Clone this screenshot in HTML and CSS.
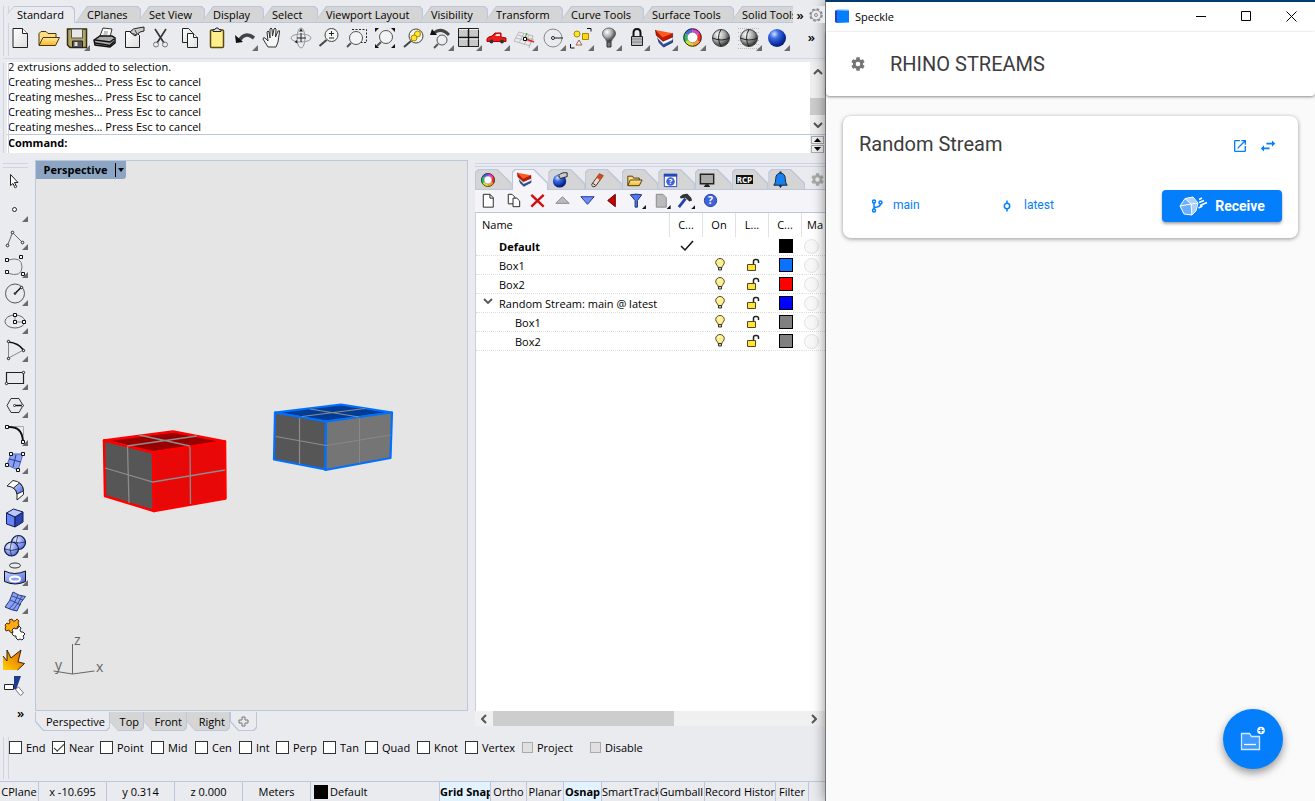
FILE: index.html
```html
<!DOCTYPE html>
<html lang="en">
<head>
<meta charset="utf-8">
<title>Rhino with Speckle</title>
<link rel="stylesheet" href="styles.css">
</head>
<body>
<svg class="defs" aria-hidden="true">
  <defs>
    <linearGradient id="gPaper" x1="0" y1="0" x2="1" y2="1"><stop offset="0" stop-color="#fff"/><stop offset="1" stop-color="#ddd"/></linearGradient>
    <linearGradient id="gFolder" x1="0" y1="0" x2="0" y2="1"><stop offset="0" stop-color="#ffe9a0"/><stop offset="1" stop-color="#f9b81c"/></linearGradient>
    <linearGradient id="gBlue" x1="0" y1="0" x2="1" y2="1"><stop offset="0" stop-color="#c4d2ff"/><stop offset="1" stop-color="#4a67e0"/></linearGradient>
    <radialGradient id="gGray" cx=".35" cy=".3" r=".75"><stop offset="0" stop-color="#fff"/><stop offset=".5" stop-color="#aaa"/><stop offset="1" stop-color="#222"/></radialGradient>
    <radialGradient id="gBall" cx=".35" cy=".28" r=".8"><stop offset="0" stop-color="#d5e4ff"/><stop offset=".3" stop-color="#3d6fe8"/><stop offset=".75" stop-color="#0a2a9c"/><stop offset="1" stop-color="#0a1550"/></radialGradient>
    <radialGradient id="gSoft" cx=".35" cy=".3" r=".8"><stop offset="0" stop-color="#e4ebff"/><stop offset="1" stop-color="#4560dd"/></radialGradient>
    <linearGradient id="gFire" x1="0" y1="1" x2="1" y2="0"><stop offset="0" stop-color="#ffd200"/><stop offset="1" stop-color="#e05a00"/></linearGradient>
  </defs>
  <symbol id="bulb" viewBox="0 0 12 14"><path d="M4 9.500C4 7.500 1.700 7 1.700 4.500a4.300 4 0 0 1 8.600 0C10.300 7 8 7.500 8 9.500z" fill="#ffee8c" stroke="#554a28"/><path d="M4.500 9.500h3v2.500h-3z" fill="#ccc" stroke="#333"/><path d="M4 3.500q1-1.500 2.500-1" stroke="#fff" fill="none"/></symbol>
  <symbol id="unlock" viewBox="0 0 14 14"><path d="M1.500 6.500h8v6h-8z" fill="#ffe343" stroke="#554a10"/><path d="M7.500 6V3.500q0-2 2-2h1q2 0 2 2V5" fill="none" stroke="#222" stroke-width="1.500"/></symbol>
  <symbol id="wheel" viewBox="0 0 20 20"><g fill="none" stroke-width="4"><path d="M10 2.500A7.500 7.500 0 0 1 16.500 6.200" stroke="#e63ac8"/><path d="M16.500 6.200A7.500 7.500 0 0 1 16.500 13.800" stroke="#ff2a2a"/><path d="M16.500 13.800A7.500 7.500 0 0 1 10 17.500" stroke="#ff9a1a"/><path d="M10 17.500A7.500 7.500 0 0 1 3.500 13.800" stroke="#d8e020"/><path d="M3.500 13.800A7.500 7.500 0 0 1 3.500 6.200" stroke="#25c06a"/><path d="M3.500 6.200A7.500 7.500 0 0 1 10 2.500" stroke="#4a62ee"/></g><circle cx="10" cy="10" r="9.200" fill="none" stroke="#222"/><circle cx="10" cy="10" r="5.500" fill="#fff" stroke="#555" stroke-width=".6"/></symbol>
  <symbol id="layers" viewBox="0 0 20 20"><path d="M3 10l5.500 5.500L18.500 11v3L9 19l-4.500-4.500z" fill="#2450b4" stroke="#0c1c50" stroke-width=".8"/><path d="M2 6l6 6.500L18.500 8v3.500L9 16l-6-6z" fill="#fff" stroke="#777" stroke-width=".5"/><path d="M.5 1l.8 5.500L8.500 13l10-4.500V4.500L8 8.500z" fill="#c81800" stroke="#400" stroke-width=".6"/><path d="M.5 1l18 3.500L8 9z" fill="#ff5a1c"/></symbol>
  <symbol id="gear" viewBox="0 0 24 24"><path fill-rule="evenodd" d="M12 15.500A3.500 3.500 0 1 1 12 8.500a3.500 3.500 0 0 1 0 7M19.430 12.970c.04-.32.07-.64.07-.97s-.03-.66-.07-1l2.110-1.630c.19-.15.24-.42.12-.64l-2-3.460c-.12-.22-.39-.31-.61-.22l-2.490 1c-.52-.39-1.060-.73-1.690-.98l-.37-2.650A.5.5 0 0 0 14 2h-4c-.25 0-.46.18-.5.42l-.37 2.650c-.63.25-1.170.59-1.690.98l-2.490-1c-.22-.09-.49 0-.61.22l-2 3.460c-.13.22-.07.49.12.64L4.570 11c-.04.34-.07.67-.07 1s.03.65.07.970l-2.110 1.660c-.19.15-.25.42-.12.64l2 3.460c.12.22.39.3.61.22l2.490-1.010c.52.4 1.060.74 1.690.99l.37 2.650c.04.24.25.42.5.42h4c.25 0 .46-.18.5-.42l.37-2.650c.63-.26 1.170-.59 1.690-.99l2.490 1.010c.22.08.49 0 .61-.22l2-3.460c.12-.22.07-.49-.12-.64z"/></symbol>
</svg>

<div class="desktop">
<main class="rhino">
  <section class="toolbars">
    <nav class="tabs" aria-label="Toolbar groups">
      <button class="tab active">Standard</button><button class="tab">CPlanes</button><button class="tab">Set View</button><button class="tab">Display</button><button class="tab">Select</button><button class="tab">Viewport Layout</button><button class="tab">Visibility</button><button class="tab">Transform</button><button class="tab">Curve Tools</button><button class="tab">Surface Tools</button><button class="tab">Solid Tools</button>
      <button class="more" aria-label="More tabs">»</button>
      <button class="options" aria-label="Options"><svg width="14" height="14" viewBox="0 0 14 14" fill="none" stroke="#888"><circle cx="7" cy="7" r="6" stroke-width="1.500" stroke-dasharray="2.700 2"/><circle cx="7" cy="7" r="5"/><circle cx="7" cy="7" r="1.500"/></svg></button>
    </nav>
    <div class="toolrow">
      <button class="tool" aria-label="New"><svg viewBox="0 0 28 28"><path d="M7 4.500h9.500l5 5v14H7z" fill="url(#gPaper)" stroke="#222"/><path d="M16.500 4.500v5h5" fill="#fff" stroke="#222"/></svg></button>
      <button class="tool" aria-label="Open"><svg viewBox="0 0 28 28"><path d="M5 21V9.500l2-2h5l2 2h8v4" fill="#ffdf80" stroke="#4a3510"/><path d="M5 21.500l4-8h16.500l-4 8z" fill="url(#gFolder)" stroke="#4a3510"/></svg></button>
      <button class="tool menu" aria-label="Save"><svg viewBox="0 0 28 28"><path d="M5.500 5h19v18.500H8L5.500 21z" fill="#b5a564" stroke="#332c12" stroke-width="1.500"/><path d="M9.500 5h11v9h-11z" fill="#e8e8e8" stroke="#555"/><path d="M10.500 17h10v6.500h-10z" fill="#555" stroke="#222"/><path d="M12.500 18h3v4h-3z" fill="#ddd"/></svg></button>
      <button class="tool" aria-label="Print"><svg viewBox="0 0 28 28"><path d="M10 12l3-8 9 1-2 8z" fill="#fff" stroke="#333"/><path d="M4 16l6-4h12l3 2v5l-5 4-15-2z" fill="#aaa" stroke="#111" stroke-width="1.500"/><path d="M5 16l15 2 4-3M5 19l15 2.500 4-4" stroke="#111" fill="none" stroke-width="1.500"/><path d="M14 8h4M13.500 10h4" stroke="#888"/></svg></button>
      <button class="tool" aria-label="Properties"><svg viewBox="0 0 28 28"><path d="M7.500 7.500h10l4 4v12h-14z" fill="url(#gPaper)" stroke="#222"/><path d="M12 8q3-4 8-4l6-1v4l-4 1-5 4z" fill="#ccc" stroke="#222"/><path d="M13 9l6 2M17 6l2 4" stroke="#444"/></svg></button>
      <button class="tool" aria-label="Cut"><svg viewBox="0 0 28 28" fill="none" stroke="#333"><path d="M9 5l9 14M20 5l-9 14" stroke-width="1.600"/><circle cx="10" cy="20.500" r="2.500" stroke="#777"/><circle cx="19" cy="20.500" r="2.500" stroke="#777"/></svg></button>
      <button class="tool" aria-label="Copy"><svg viewBox="0 0 28 28" fill="url(#gPaper)" stroke="#222"><path d="M8.500 4.500h6l4 4v10h-10z"/><path d="M13.500 9.500h6l4 4v10h-10z"/><path d="M19.500 9.500v4h4" fill="#fff"/></svg></button>
      <button class="tool" aria-label="Paste"><svg viewBox="0 0 28 28"><rect x="8.500" y="6" width="13" height="17.500" rx="1" fill="#fdf08c" stroke="#5a4a10" stroke-width="1.500"/><path d="M11 7.500V5.500h2l1-1.500h2l1 1.500h2v2z" fill="#ddd" stroke="#222"/></svg></button>
      <button class="tool menu" aria-label="Undo"><svg viewBox="0 0 28 28"><path d="M9 17Q15 7 24 14" fill="none" stroke="#444" stroke-width="3.500"/><path d="M5 11l1 8 7-1z" fill="#111"/></svg></button>
      <button class="tool" aria-label="Pan"><svg viewBox="0 0 28 28"><path d="M10 23l-5-8q0-2 2-1l3 3-1-9q1-2 2 0l1 6V5q1-2 2 0l.5 7L16 5q1-2 2 0l-.5 8 2.500-6q2-1 1.500 1l-1.500 10-2 5z" fill="#f5f5f5" stroke="#333"/></svg></button>
      <button class="tool" aria-label="Rotate view"><svg viewBox="0 0 28 28" fill="none" stroke="#999"><ellipse cx="15" cy="14" rx="10" ry="4"/><ellipse cx="15" cy="14" rx="4" ry="10"/><path d="M15 9v9M11 14h9" stroke="#222"/><path d="M13 7.500l2-3 2 3zM11 16l-2.500 2 3 1.500z" fill="#222" stroke="none"/></svg></button>
      <button class="tool" aria-label="Zoom dynamic"><svg viewBox="0 0 28 28" fill="none" stroke="#444"><circle cx="17.500" cy="11" r="6.500" fill="#f4f4f4"/><path d="M12.500 16l-7 6" stroke-width="2"/><path d="M15 9.500h5M17.500 7v5M15 14h5" stroke="#222"/></svg></button>
      <button class="tool" aria-label="Zoom window"><svg viewBox="0 0 28 28" fill="none" stroke="#555"><circle cx="14" cy="14" r="6.500" fill="#f4f4f4"/><path d="M9 19l-4 4" stroke-width="2"/><path d="M10 5.500h14.500v13H19" stroke="#222" stroke-dasharray="2 1.500"/></svg></button>
      <button class="tool" aria-label="Zoom extents"><svg viewBox="0 0 28 28" fill="none" stroke="#555"><circle cx="16" cy="13" r="6.500" fill="#f4f4f4"/><path d="M11 18l-4 4" stroke-width="2"/><path d="M5 4h4L5 8zM25 4v4l-4-4zM5 24v-4l4 4zM25 24h-4l4-4z" fill="#111" stroke="none"/></svg></button>
      <button class="tool" aria-label="Zoom selected"><svg viewBox="0 0 28 28" fill="none" stroke="#444"><circle cx="18" cy="12" r="7" fill="#f4f4f4"/><path d="M13 17l-7 6" stroke-width="2"/><circle cx="19.500" cy="10" r="3" fill="#ffe52e" stroke="#a80"/><circle cx="16" cy="14" r="3" fill="#ffe52e" stroke="#a80"/></svg></button>
      <button class="tool menu" aria-label="Undo view"><svg viewBox="0 0 28 28" fill="none"><path d="M8 9q7-6 15 2" stroke="#444" stroke-width="3"/><path d="M4 11l2-6 5 6z" fill="#111"/><circle cx="16" cy="16" r="5" fill="#eee" stroke="#555"/><path d="M12 20l-4 4" stroke="#555" stroke-width="2"/></svg></button>
      <button class="tool menu" aria-label="Four viewports"><svg viewBox="0 0 28 28"><path d="M4.500 4.500h20v18h-20z" fill="#c9c9c9" stroke="#222"/><path d="M14.500 4.500v18M4.500 13.500h20" stroke="#111" stroke-width="1.500"/><path d="M5 5.500h9M15.500 5.500h9M5 15h9M15.500 15h9" stroke="#eee"/></svg></button>
      <button class="tool menu" aria-label="Set view"><svg viewBox="0 0 28 28"><path d="M5 15q0-2 5-3l3-3h6v4l5 1v3.500H5z" fill="#ee1c1c" stroke="#a00"/><path d="M13 12l1.500-2H18v2z" fill="#fdd"/><circle cx="9.500" cy="17.500" r="2" fill="#333"/><circle cx="20" cy="17.500" r="2" fill="#333"/></svg></button>
      <button class="tool menu" aria-label="CPlane"><svg viewBox="0 0 28 28" fill="none" stroke="#bbb"><path d="M9 8l14 4-4 12M4 17l16 5M6 14l16 4M8 11l16 5M9 8L4 17M14 9L9 19M19 11l-5 10M23 12l-4 11"/><path d="M15 14l2-5" stroke="#2a2"/><path d="M16 15l8 3" stroke="#d22" stroke-width="1.500"/><path d="M13.500 13.500h3v3h-3z" fill="#fff" stroke="#111"/></svg></button>
      <button class="tool menu" aria-label="Osnap"><svg viewBox="0 0 28 28" fill="none" stroke="#888"><circle cx="15" cy="14" r="9"/><path d="M16 14h9" stroke="#222"/><circle cx="15" cy="14" r="1.500" fill="#fff" stroke="#222"/></svg></button>
      <button class="tool menu" aria-label="Select"><svg viewBox="0 0 28 28" fill="none"><circle cx="11" cy="10" r="3" fill="#ffe52e" stroke="#a80"/><path d="M16.500 9.500h6v6h-6z" fill="#ffd815" stroke="#a80"/><path d="M13 16l3 5h-6z" stroke="#a64"/><path d="M21 4.500h4v3M4.500 20v4h4" stroke="#111"/></svg></button>
      <button class="tool menu" aria-label="Hide"><svg viewBox="0 0 28 28"><path d="M12.500 17.500c0-3-4-4-4-8a6.500 5.500 0 0 1 13 0c0 4-4 5-4 8z" fill="url(#gGray)" stroke="#666"/><path d="M13 18h4v5h-4z" fill="#777" stroke="#333"/></svg></button>
      <button class="tool menu" aria-label="Lock"><svg viewBox="0 0 28 28"><path d="M11.500 13V9q0-4 3.500-4t3.500 4v4" fill="none" stroke="#111" stroke-width="2"/><path d="M9.500 12.500h11v9h-11z" fill="#bbb" stroke="#222"/><path d="M10 15h10M10 18h10" stroke="#888"/></svg></button>
      <button class="tool menu" aria-label="Layers"><svg viewBox="-5 -5 28 28"><use href="#layers" width="19" height="19"/></svg></button>
      <button class="tool menu" aria-label="Properties"><svg viewBox="-5 -4 28 28"><use href="#wheel" width="19" height="19"/></svg></button>
      <button class="tool" aria-label="Shade"><svg viewBox="0 0 28 28"><circle cx="15" cy="14" r="8.500" fill="url(#gGray)" stroke="#444"/><path d="M15 5.500q-5 8 0 17M6.500 14q9 4 17 0" stroke="#222" fill="none"/></svg></button>
      <button class="tool menu" aria-label="Shade selected"><svg viewBox="0 0 28 28"><path d="M4 4.500h22M4 8.500h22M4 12.500h22M4 16.500h22M4 20.500h22M4 24.500h22" stroke="#bbb" stroke-dasharray="1 1"/><circle cx="15" cy="14" r="8.500" fill="url(#gGray)" stroke="#444"/><path d="M15 5.500q-5 8 0 17M6.500 14q9 4 17 0" stroke="#222" fill="none"/></svg></button>
      <button class="tool menu" aria-label="Render"><svg viewBox="0 0 28 28"><circle cx="15" cy="14" r="9" fill="url(#gBall)"/></svg></button>
      <button class="more" aria-label="More tools">»</button>
    </div>
  </section>

  <section class="command">
    <div class="history">
      <div class="log">
        <p>2 extrusions added to selection.</p><p>Creating meshes... Press Esc to cancel</p><p>Creating meshes... Press Esc to cancel</p><p>Creating meshes... Press Esc to cancel</p><p>Creating meshes... Press Esc to cancel</p>
      </div>
      <div class="vscroll"><svg width="10" height="6" viewBox="0 0 10 6"><path d="M1 5l4-4 4 4"/></svg><span class="thumb"></span><svg width="10" height="6" viewBox="0 0 10 6"><path d="M1 1l4 4 4-4"/></svg></div>
    </div>
    <div class="prompt"><label for="cmd">Command:</label><input id="cmd" type="text"><div class="spin"><button aria-label="Up"><svg width="7" height="4" viewBox="0 0 7 4"><path d="M0 4l3.500-4L7 4z"/></svg></button><button aria-label="Down"><svg width="7" height="4" viewBox="0 0 7 4"><path d="M0 0l3.500 4L7 0z"/></svg></button></div></div>
  </section>

  <section class="work">
    <div class="sidebar">
      <button class="tool" aria-label="Select"><svg viewBox="0 0 28 28"><path d="M10.500 7.500v11l2.500-2 2 4 1.500-1-2-4h3.500z" fill="#fff" stroke="#222"/><circle cx="15.500" cy="19.500" r="1.200" fill="#fff" stroke="#222" stroke-width=".8"/></svg></button>
      <button class="tool menu" aria-label="Point"><svg viewBox="0 0 28 28"><circle cx="14.500" cy="14.500" r="2" fill="#fff" stroke="#222"/></svg></button>
      <button class="tool menu" aria-label="Polyline"><svg viewBox="0 0 28 28" fill="#fff" stroke="#222"><path d="M7.500 22.500l5-13 10 10" fill="none" stroke="#666"/><circle cx="7.500" cy="22.500" r="1.300"/><circle cx="12.500" cy="9.500" r="1.300"/><circle cx="22.500" cy="19.500" r="1.300"/></svg></button>
      <button class="tool menu" aria-label="Curve"><svg viewBox="0 0 28 28" fill="#fff" stroke="#111"><path d="M8 9q14-4 14 7t-15 6" fill="none" stroke="#777"/><path d="M5.500 7.500h3v3h-3zM19.500 4.500h3v3h-3zM5.500 19.500h3v3h-3zM21.500 21.500h3v3h-3z"/></svg></button>
      <button class="tool menu" aria-label="Circle"><svg viewBox="0 0 28 28" fill="none" stroke="#555"><circle cx="15" cy="14.500" r="9.500"/><path d="M15 14.500l6-6" stroke="#111" stroke-width="1.500"/><circle cx="15" cy="14.500" r="1" fill="#111"/><circle cx="21.500" cy="8.500" r="1.200" fill="#fff" stroke="#111"/></svg></button>
      <button class="tool menu" aria-label="Ellipse"><svg viewBox="0 0 28 28" fill="#fff" stroke="#111"><ellipse cx="15" cy="14.500" rx="10" ry="6.500" fill="none" stroke="#666"/><path d="M15 8v7h9" fill="none" stroke="#888"/><path d="M13.500 6.500h3v3h-3zM13.500 13.500h3v3h-3zM22.500 13.500h3v3h-3z"/></svg></button>
      <button class="tool menu" aria-label="Arc"><svg viewBox="0 0 28 28" fill="#fff" stroke="#111"><path d="M8.500 7v16l15-8" fill="none" stroke="#888"/><path d="M8.500 7q10 1 15 8" fill="none" stroke-width="1.500"/><circle cx="8.500" cy="6.500" r="1.200"/><circle cx="23.500" cy="15.500" r="1.200"/><circle cx="8.500" cy="23.500" r="1.200"/></svg></button>
      <button class="tool menu" aria-label="Rectangle"><svg viewBox="0 0 28 28" fill="#fff" stroke="#222"><path d="M6.500 9.500h17v11h-17z" fill="none" stroke-width="1.200"/><circle cx="23.500" cy="9.500" r="1.200"/><circle cx="6.500" cy="20.500" r="1.200"/></svg></button>
      <button class="tool menu" aria-label="Polygon"><svg viewBox="0 0 28 28" fill="none" stroke="#333"><path d="M7 14.500l4-7h8l4 7-4 7h-8z"/><path d="M14.500 14.500h8" stroke="#111" stroke-width="1.500"/><circle cx="14.500" cy="14.500" r="1" fill="#fff"/><circle cx="22.500" cy="14.500" r="1" fill="#fff"/></svg></button>
      <button class="tool menu" aria-label="Fillet"><svg viewBox="0 0 28 28" fill="#fff" stroke="#111"><path d="M15 7.500h8.500v9" fill="none" stroke="#aaa"/><path d="M8 8q14-1 15 14" fill="none" stroke-width="2"/><path d="M5.500 6.500h3v3h-3zM21.500 21.500h3v3h-3z"/></svg></button>
      <button class="tool menu" aria-label="Surface"><svg viewBox="0 0 28 28" fill="#fff" stroke="#111"><path d="M11 7h12l-5 16-11-5z" fill="#8ba1f4" stroke="#5268c0"/><path d="M16 8l-3 12M9 12l12 3" fill="none" stroke="#2a3a88"/><path d="M9.500 5.500h3v3h-3zM21.500 5.500h3v3h-3zM5.500 16.500h3v3h-3zM16.500 21.500h3v3h-3z"/></svg></button>
      <button class="tool menu" aria-label="Sweep"><svg viewBox="0 0 28 28" stroke="#222" fill="#fff"><path d="M7 11l6-5.500q10 1 10.500 11v3L17 25v-6q-1-7-10-8z"/><path d="M13.500 13l6-5q4 3 4 8L17 19q-.5-4-3.500-6z" fill="url(#gBlue)"/></svg></button>
      <button class="tool menu" aria-label="Box"><svg viewBox="0 0 28 28" stroke="#111c55"><path d="M6.500 10l8.500 4v10l-8.500-3z" fill="#6684f8"/><path d="M15 14l8-5v10l-8 5z" fill="#2a44b0"/><path d="M6.500 10l7-4 9.500 3-8 5z" fill="#b9c8ff"/></svg></button>
      <button class="tool menu" aria-label="Boolean"><svg viewBox="0 0 28 28" fill="url(#gSoft)" stroke="#111c44" stroke-width="1.200"><circle cx="18.500" cy="11.500" r="7"/><circle cx="11.500" cy="18" r="7"/><path d="M11.500 11q-3 7 0 14M5 18q6 3 13 0M18 5q-3 7 0 8M14 11q5 2 11 0" fill="none" stroke-width=".7"/></svg></button>
      <button class="tool menu" aria-label="Project"><svg viewBox="0 0 28 28"><ellipse cx="15" cy="6.500" rx="5.500" ry="2.500" fill="none" stroke="#333"/><path d="M4.500 12q10 5 21 0v10.500q-10 5-21 0z" fill="url(#gBlue)" stroke="#111"/><ellipse cx="15" cy="20" rx="5" ry="2.500" fill="#8fa5fa" stroke="#fff" stroke-width="2"/></svg></button>
      <button class="tool menu" aria-label="Mesh"><svg viewBox="0 0 28 28" stroke="#24367c"><path d="M13 5q6 4 12.500 4.500-5 5-8.500 14.500-6-1-12-4 5-5 8-15z" fill="#8ba1f4"/><path d="M10 13l11 5M12 9l11 4M18 8q-3 9-9 14M22 9q-4 8-9 14" fill="none" stroke-width=".8"/></svg></button>
      <button class="tool" aria-label="Group"><svg viewBox="0 0 28 28" stroke="#553300"><path d="M5 10l2-2 2 1 1-2-1-2 3-1 1 2 2 0 2-2 2 2-1 2 1 2-2 2 1 3-3-1-2 2 0 2-3-1-1-2-3 1-1-3 1-1z" fill="#ffa914"/><path d="M12 15l2-2 2 1 2-1 1-2 2 2-1 2 1 2 2 0 2 2-2 2 1 2-2 2-2-1-2 1-2-2 0-2-2 0-2-2 1-2z" fill="#fff" stroke="#222"/></svg></button>
      <button class="tool" aria-label="Explode"><svg viewBox="0 0 28 28"><path d="M3 13l4 5V7l4 8L21 7l-3 12 6.500 1.500-7 6.500H3z" fill="url(#gFire)"/><path d="M3 13l4 5V7l4 8L21 7l-3 12 6.500 1.500-7 6.500" fill="none" stroke="#3a2200"/></svg></button>
      <button class="tool" aria-label="Trim"><svg viewBox="0 0 28 28"><path d="M4.500 13.500h9v5h-9z" fill="#fff" stroke="#222"/><path d="M14 5h7l-5 14-2-1z" fill="#1d3b90"/><path d="M15.500 18.500l3-2.500 5 6-3 2.500z" fill="#fff" stroke="#777"/></svg></button>
      <button class="more" aria-label="More tools">»</button>
    </div>

    <div class="views">
      <div class="viewport">
        <div class="vtitle"><button>Perspective</button><button class="drop" aria-label="Viewport menu"></button></div>
        <svg class="scene" role="img" aria-label="Two boxes in perspective">
          <g transform="translate(-36 -161)">
            <g stroke="#f00" stroke-width="2.500" stroke-linejoin="round"><path d="M104 440.500l69-9 52 10-72 11z" fill="#980000"/><path d="M104 440.500l49 12 1 58.500-49-15z" fill="#565656"/><path d="M153 452.500l72-11 .5 57-71.500 12.500z" fill="#e80808"/></g>
            <path d="M127.500 447l1.500 56M105 468l48 14 72-12M190 447l.5 57M139 435l51 11M127 446l70-10" fill="none" stroke="#8c8c8c" stroke-width="1.300"/>
            <g stroke="#0070ff" stroke-width="2.200" stroke-linejoin="round"><path d="M275 412.500l66-8 51 8-66 9z" fill="#003c94"/><path d="M275 412.500l51 9-.5 48-51.500-10z" fill="#565656"/><path d="M326 421.500l66-9-1.500 45.500-65 12z" fill="#757575"/></g>
            <path d="M299.500 418v46M276 436.500l50 9M310 409l49 8M302 416.500l63-8" fill="none" stroke="#8c8c8c" stroke-width="1.200"/>
            <path d="M326 445.500l65-10.500M359.500 418v45" fill="none" stroke="#888" stroke-width="1"/>
            <path d="M72.500 644v30l22-3M72.500 674l-19-3" fill="none" stroke="#666"/>
            <g class="axis"><text x="74" y="645">z</text><text x="96" y="672">x</text><text x="55" y="670">y</text></g>
          </g>
        </svg>
      </div>
      <nav class="vtabs" aria-label="Viewports"><button class="vtab active">Perspective</button><button class="vtab">Top</button><button class="vtab">Front</button><button class="vtab">Right</button><button class="vtab add" aria-label="Add viewport"><svg width="11" height="11" viewBox="0 0 11 11"><path d="M4 1h3v3h3v3H7v3H4V7H1V4h3z" fill="none" stroke="#777"/></svg></button></nav>
    </div>

    <aside class="panel">
      <nav class="ptabs" aria-label="Panels">
        <button class="ptab" aria-label="Properties"><svg viewBox="0 0 20 20"><use href="#wheel" x="3" y="3" width="15" height="15"/></svg></button>
        <button class="ptab active" aria-label="Layers"><svg viewBox="0 0 20 20"><use href="#layers" x="2" y="2" width="16" height="16"/></svg></button>
        <button class="ptab" aria-label="Rendering"><svg viewBox="0 0 20 20"><circle cx="9" cy="11.500" r="7" fill="url(#gBall)"/><path d="M8 6q3-4 9-3v4l-4 1-3 1z" fill="#ccc" stroke="#222"/></svg></button>
        <button class="ptab" aria-label="Materials"><svg viewBox="0 0 20 20"><path d="M4 15l8-11 4 2-8 11q-4 2-4-2z" fill="#f4d9c8" stroke="#333"/><path d="M9 8l4 3 3-5-4-2z" fill="#d8481e"/><path d="M5 14l3 2" stroke="#333"/></svg></button>
        <button class="ptab" aria-label="Libraries"><svg viewBox="0 0 20 20"><path d="M3 16V6.500h5l1 2h6V11" fill="#ffdf80" stroke="#4a3510"/><path d="M3 16.500l2.500-6H18l-3 6z" fill="url(#gFolder)" stroke="#4a3510"/></svg></button>
        <button class="ptab" aria-label="Help"><svg viewBox="0 0 20 20"><path d="M3.500 4.500h13v13h-13z" fill="#fff" stroke="#2448b8"/><path d="M3 4h14v3H3z" fill="#2448b8"/><circle cx="10" cy="12" r="4.500" fill="#3f62dc"/><text x="10" y="15" class="glyph" fill="#fff">?</text></svg></button>
        <button class="ptab" aria-label="Display"><svg viewBox="0 0 20 20"><path d="M2.500 4.500h14v10h-14z" fill="#aaa" stroke="#222" stroke-width="1.500"/><path d="M6 18h7l-2-3H8z" fill="#222"/></svg></button>
        <button class="ptab rcp">RCP</button>
        <button class="ptab" aria-label="Notifications"><svg viewBox="0 0 20 20"><path d="M3 16q2-2 2-7 0-5 5-6 5 1 5 6 0 5 2 7z" fill="#1680f0" stroke="#123"/><path d="M8 16h4l-2 3zM9 1.500h2v2H9z" fill="#123"/></svg></button>
        <button class="pgear" aria-label="Panel options"><svg width="15" height="15" viewBox="0 0 24 24" fill="#aaa"><use href="#gear"/></svg></button>
      </nav>
      <div class="ptools">
        <button aria-label="New layer"><svg viewBox="0 0 20 20"><path d="M4.500 3.500h7l3.500 3.500v10H4.500z" fill="#fff" stroke="#222"/><path d="M11.500 3.500v4H15" fill="none" stroke="#222"/></svg></button>
        <button aria-label="New sublayer"><svg viewBox="0 0 20 20" fill="#fff" stroke="#222"><path d="M4.500 3.500h4l3 3v7h-7z"/><path d="M9.500 7.500h4l3 3v6h-7z"/></svg></button>
        <button aria-label="Delete"><svg viewBox="0 0 20 20"><path d="M3.500 4l13 12.500M16.500 4l-13 12.500" stroke="#d30d0d" stroke-width="2.500"/></svg></button>
        <button aria-label="Move up"><svg viewBox="0 0 20 20"><path d="M3 13l7-7 7 7z" fill="#bbb" stroke="#888"/></svg></button>
        <button aria-label="Move down"><svg viewBox="0 0 20 20"><path d="M3 6h14l-7 8z" fill="#6f8cf6" stroke="#1e3488"/></svg></button>
        <button aria-label="Move left"><svg viewBox="0 0 20 20"><path d="M14 3.500v13L6 10z" fill="#c00" stroke="#500"/></svg></button>
        <button class="menu" aria-label="Filter"><svg viewBox="0 0 20 20"><path d="M3.500 4q6-1.500 12 0L11 10v7H8.500v-7z" fill="#5377ee" stroke="#1c2f70"/></svg></button>
        <button class="menu" aria-label="Layer state"><svg viewBox="0 0 20 20"><path d="M4.500 3.500h7l3.500 3.500v10H4.500z" fill="#bbb" stroke="#888"/></svg></button>
        <button class="menu" aria-label="Tools"><svg viewBox="0 0 20 20"><path d="M10 8l-7 9" stroke="#2742a8" stroke-width="3"/><path d="M4 6q3-3.500 8-3l4 4 1 3-3 1-4-4-5 1z" fill="#333"/></svg></button>
        <button aria-label="Help"><svg viewBox="0 0 20 20"><circle cx="10" cy="10" r="6.500" fill="#3f62dc" stroke="#2440a0"/><text x="10" y="14" class="glyph big" fill="#fff">?</text></svg></button>
      </div>
      <div class="layers">
        <table>
          <colgroup><col><col class="c"><col class="c"><col class="c"><col class="c"><col class="m"></colgroup>
          <thead><tr><th>Name</th><th>C...</th><th>On</th><th>L...</th><th>C...</th><th>Ma</th></tr></thead>
          <tbody>
            <tr class="current"><td>Default</td><td><svg width="14" height="12" viewBox="0 0 14 12"><path d="M1 6l4 4 8-9" fill="none" stroke="#111" stroke-width="1.500"/></svg></td><td></td><td></td><td><span class="swatch black"></span></td><td><span class="mat"></span></td></tr>
            <tr><td>Box1</td><td></td><td><svg width="12" height="14"><use href="#bulb"/></svg></td><td><svg width="14" height="14"><use href="#unlock"/></svg></td><td><span class="swatch azure"></span></td><td><span class="mat"></span></td></tr>
            <tr><td>Box2</td><td></td><td><svg width="12" height="14"><use href="#bulb"/></svg></td><td><svg width="14" height="14"><use href="#unlock"/></svg></td><td><span class="swatch red"></span></td><td><span class="mat"></span></td></tr>
            <tr><td class="parent"><svg class="chev" width="10" height="7" viewBox="0 0 10 7"><path d="M1 1l4 4 4-4" fill="none" stroke="#555" stroke-width="1.800"/></svg>Random Stream: main @ latest</td><td></td><td><svg width="12" height="14"><use href="#bulb"/></svg></td><td><svg width="14" height="14"><use href="#unlock"/></svg></td><td><span class="swatch blue"></span></td><td><span class="mat"></span></td></tr>
            <tr><td class="child">Box1</td><td></td><td><svg width="12" height="14"><use href="#bulb"/></svg></td><td><svg width="14" height="14"><use href="#unlock"/></svg></td><td><span class="swatch gray"></span></td><td><span class="mat"></span></td></tr>
            <tr><td class="child">Box2</td><td></td><td><svg width="12" height="14"><use href="#bulb"/></svg></td><td><svg width="14" height="14"><use href="#unlock"/></svg></td><td><span class="swatch gray"></span></td><td><span class="mat"></span></td></tr>
          </tbody>
        </table>
      </div>
      <div class="hscroll"><svg width="6" height="10" viewBox="0 0 6 10"><path d="M5 1L1 5l4 4"/></svg><div class="track"><span class="thumb"></span></div><svg width="6" height="10" viewBox="0 0 6 10"><path d="M1 1l4 4-4 4"/></svg></div>
    </aside>
  </section>

  <section class="osnap">
    <label><input type="checkbox">End</label><label><input type="checkbox" checked>Near</label><label><input type="checkbox">Point</label><label><input type="checkbox">Mid</label><label><input type="checkbox">Cen</label><label><input type="checkbox">Int</label><label><input type="checkbox">Perp</label><label><input type="checkbox">Tan</label><label><input type="checkbox">Quad</label><label><input type="checkbox">Knot</label><label><input type="checkbox">Vertex</label><label><input type="checkbox" disabled>Project</label><label><input type="checkbox" disabled>Disable</label>
  </section>

  <footer class="status">
    <button>CPlane</button><span>x -10.695</span><span>y 0.314</span><span>z 0.000</span><button>Meters</button><button class="layer"><i></i>Default</button><button class="on">Grid Snap</button><button>Ortho</button><button>Planar</button><button class="on">Osnap</button><button>SmartTrack</button><button>Gumball</button><button class="start">Record History</button><button>Filter</button><span></span>
  </footer>
</main>

<section class="speckle">
  <header class="titlebar">
    <svg width="15" height="15" viewBox="0 0 15 15"><path d="M0 1.500L2 1v13l-2-1z" fill="#3a33c8"/><path d="M2 1l12 .5v12L2 14z" fill="#047efb"/><path d="M0 1.500L2 .5h11l1 1z" fill="#6ab4ff"/></svg>
    <span>Speckle</span>
    <button aria-label="Minimize"><svg width="11" height="11" viewBox="0 0 11 11"><path d="M0 5.500h10"/></svg></button>
    <button aria-label="Maximize"><svg width="11" height="11" viewBox="0 0 11 11"><path d="M.5.5h9v9h-9z"/></svg></button>
    <button aria-label="Close"><svg width="11" height="11" viewBox="0 0 11 11"><path d="M.5.5l10 10M10.500.5l-10 10"/></svg></button>
  </header>
  <div class="appbar"><button aria-label="Settings"><svg width="16" height="16" viewBox="0 0 24 24" fill="#757575"><use href="#gear"/></svg></button><h1>RHINO STREAMS</h1></div>
  <div class="content">
    <article class="card">
      <div class="cardtop">
        <h2>Random Stream</h2>
        <a href="#" aria-label="Open in browser"><svg width="16" height="16" viewBox="0 0 24 24"><path d="M14 3v2h3.590l-9.830 9.830 1.410 1.410L19 6.410V10h2V3M19 19H5V5h7V3H5a2 2 0 0 0-2 2v14a2 2 0 0 0 2 2h14a2 2 0 0 0 2-2v-7h-2z"/></svg></a>
        <a href="#" aria-label="Switch direction"><svg width="16" height="16" viewBox="0 0 24 24"><path d="M21 9l-4-4v3h-7v2h7v3M7 11l-4 4 4 4v-3h7v-2H7z" transform="translate(-2.400 -2.400) scale(1.200)"/></svg></a>
      </div>
      <div class="cardrow">
        <button class="link"><svg width="16" height="16" viewBox="0 0 16 16" fill="none"><circle cx="5" cy="3.500" r="1.500"/><circle cx="5" cy="12.500" r="1.500"/><circle cx="11.500" cy="4.500" r="1.500"/><path d="M5 5v6M11.500 6q0 3-6.500 3.500"/></svg>main</button>
        <button class="link"><svg width="16" height="16" viewBox="0 0 16 16" fill="none"><circle cx="7" cy="8" r="2.700"/><path d="M7 2.500v2.800M7 10.700v2.800"/></svg>latest</button>
        <button class="receive"><svg width="29" height="20" viewBox="0 0 29 20"><path d="M6 2.500L14 1l5 6-2 8-4 4-8-1-4-8z" fill="#6aaeff"/><path d="M12 8l6-1-1 8-5 4zM6 2.500L14 1l4 6-6 1z" fill="#a9d0ff"/><path d="M6 2.500L14 1l5 6-2 8-4 4-8-1-4-8zM6 2.500l6 5.500 7-1M12 8l1 11M12 8L1 10" stroke="#fff" fill="none"/><path d="M20 3.500l3-1.500M20 6.500l5-2M21 9.500l7-3M19.500 12l4-2" stroke="#fff" stroke-width="1.500"/></svg>Receive</button>
      </div>
    </article>
  </div>
  <button class="fab" aria-label="Add stream"><svg width="26" height="26" viewBox="0 0 26 26"><path d="M1.500 7.500h8l2 3h8v13h-18z" fill="#3d9bff" stroke="#d3e8ff" stroke-width="1.300"/><path d="M4 18.500h12" stroke="#fff" stroke-width="1.300"/><circle cx="21" cy="4.500" r="3.800" fill="#fff"/><path d="M18.500 4.500h5M21 2v5" stroke="#047efb" stroke-width="1.200"/></svg></button>
</section>
</div>
</body>
</html>
```
FILE: styles.css
```css
* { box-sizing: border-box; }
body { margin: 0; font: 11px/15px "Open Sans", "Noto Sans", sans-serif; color: #000; }
button { margin: 0; padding: 0; border: 0; background: none; font: inherit; color: inherit; }
p, h1, h2 { margin: 0; font-weight: 400; }
svg { display: block; flex: none; }
.defs { position: absolute; width: 0; height: 0; }

.desktop { display: grid; grid-template-columns: minmax(0, 825fr) minmax(0, 490fr); height: 100vh; overflow: hidden; }

/* Modeller window */
.rhino { display: flex; flex-direction: column; min-width: 0; background: #eaebef; overflow: hidden; }

.toolbars { height: 59px; margin-left: 3px; padding-top: 6px; border-bottom: 1px solid #d3d8e8; position: relative; }
.toolbars::before, .command::before, .osnap::before { content: ""; position: absolute; left: 0; top: 6px; bottom: 2px; width: 4px; border: solid #cdd3e4; border-width: 0 1px; }

.tabs { display: grid; grid-template-columns: 68px 62px 64px 59px 54px 105px 65px 75px 81px 90px minmax(0, 1fr) 14px 18px; height: 17px; margin-left: 4px; border-bottom: 1px solid #c3cbdf; }
.tab { position: relative; z-index: 0; height: 17px; padding-left: 12px; line-height: 17px; text-align: left; white-space: nowrap; }
.tab::before, .tab::after { content: ""; position: absolute; z-index: -1; inset: 0 -4px 0 0; clip-path: polygon(0 100%, 12px 0, calc(100% - 3px) 0, 100% 3px, 100% 100%); background: #bcc6dc; }
.tab::after { inset: 1px -3px 1px 1px; background: #d5d5d5; }
.tab.active { padding-left: 10px; }
.tab.active::before { right: 0; clip-path: polygon(0 50%, 7px 0, calc(100% - 3px) 0, 100% 3px, 100% 100%, 0 100%); }
.tab.active::after { inset: 1px 1px 0 0; background: #eaebef; clip-path: polygon(0 50%, 7px 0, calc(100% - 3px) 0, 100% 3px, 100% 100%, 0 100%); }
.tab:nth-child(11) { overflow: hidden; }
.more { font-weight: 600; font-size: 13px; line-height: 14px; }
.tabs .more, .tabs .options { z-index: 1; background: #eaebef; }
.tabs .options { display: grid; place-items: center; }

.toolrow { display: flex; height: 34px; margin-left: 3px; padding-top: 1px; }
.tool { position: relative; flex: none; width: 28px; height: 28px; }
.tool svg { width: 28px; height: 28px; }
.menu::after { content: ""; position: absolute; right: 0; bottom: 1px; width: 6px; height: 6px; background: #6b6b6b; clip-path: polygon(100% 0, 100% 100%, 0 100%); }
.toolrow .more { margin: 0 10px 7px auto; }

.command { position: relative; margin: 3px 0 0 3px; padding-left: 4px; }
.command::before { top: 1px; bottom: 0; }
.history { display: flex; height: 73px; background: #fff; border-bottom: 1px solid #bcc6dc; overflow: hidden; }
.log { flex: 1; padding-left: 1px; margin-top: -3px; }
.vscroll { display: flex; flex-direction: column; align-items: center; width: 15px; padding: 7px 0 6px; background: #f0f0f0; fill: none; stroke: #555; stroke-width: 2; }
.vscroll .thumb { width: 15px; height: 17px; margin: auto 0 7px; background: #cdcdcd; }
.prompt { display: flex; align-items: center; height: 18px; padding-left: 1px; background: #fff; }
.prompt label { font-weight: 700; padding-bottom: 3px; }
.prompt input { flex: 1; min-width: 0; height: 16px; border: 0; outline: 0; font: inherit; background: none; }
.spin { display: grid; gap: 1px; width: 15px; padding: 1px; background: #eaebef; }
.spin button { display: grid; place-items: center; height: 8px; border: 1px solid #aaa; background: #f0f0f0; }

.work { display: flex; flex: 1; min-height: 0; margin-top: 7px; }
.sidebar { flex: none; width: 28px; margin-right: 7px; padding-top: 7px; position: relative; }
.sidebar::before { content: ""; position: absolute; left: 3px; right: 0; top: 3px; height: 3px; border: solid #cdd3e8; border-width: 1px 0; }
.sidebar .tool { display: block; }
.sidebar .more { display: block; width: 28px; height: 28px; padding-left: 13px; }

.views { flex: 1; display: flex; flex-direction: column; min-width: 0; }
.viewport { position: relative; flex: 1; border: 1px solid #bcc6dc; background: #e5e5e5; }
.vtitle { display: flex; width: 90px; height: 18px; background: #8ba5c3; font-weight: 700; border-radius: 0 0 3px 0; }
.vtitle button { width: 79px; padding-bottom: 2px; text-align: center; }
.vtitle .drop { width: 11px; margin: 2px 0; padding: 0; border-left: 1px solid #000; display: grid; place-items: center; }
.drop::before { content: ""; border: solid transparent; border-width: 4px 3px 0; border-top-color: #000; }
.scene { position: absolute; inset: 0; width: 100%; height: 100%; z-index: 0; }
.axis { font-size: 14px; fill: #666; }
.glyph { font: 700 8px "Open Sans", sans-serif; text-anchor: middle; }
.glyph.big { font-size: 11px; }

.vtabs { display: grid; grid-template-columns: 75px 34px 43px 43px 27px; height: 26px; padding-top: 1px; }
.vtab { position: relative; z-index: 0; height: 19px; line-height: 18px; text-align: right; padding-right: 5px; }
.vtab::before, .vtab::after { content: ""; position: absolute; z-index: -1; inset: 0; clip-path: polygon(0 0, 100% 0, 100% calc(100% - 3px), calc(100% - 3px) 100%, 8px 100%, 0 calc(100% - 9px)); background: #bcc6dc; }
.vtab::after { inset: 0 1px 1px 0; background: #d5d5d5; }
.vtab.active::after, .vtab.add::after { left: 1px; background: #eaebef; }
.vtab.add { display: grid; place-items: center; padding-right: 0; }

.panel { display: flex; flex-direction: column; flex: none; width: 350px; margin: 3px 0 11px 7px; border-top: 1px solid #cdd3e8; }
.panel::before { content: ""; height: 2px; border-bottom: 1px solid #cdd3e8; }
.ptabs { position: relative; display: grid; grid-template-columns: repeat(9, minmax(0, 1fr)); height: 21px; margin-top: 2px; padding-right: 20px; border-bottom: 1px solid #bcc6dc; }
.ptab { position: relative; z-index: 0; height: 20px; display: flex; align-items: center; padding-left: 3px; }
.ptab svg { width: 19px; height: 19px; }
.ptab::before, .ptab::after { content: ""; position: absolute; z-index: -1; inset: 0; clip-path: polygon(0 3px, 3px 0, calc(100% - 14px) 0, 100% 14px, 100% 100%, 0 100%); background: #bcc6dc; }
.ptab::after { inset: 1px 1px 0 1px; background: #d5d5d5; }
.ptab.active::after { background: #f5f5f9; bottom: -1px; }
.ptab.rcp { padding-left: 5px; font: 700 8px/9px "Open Sans", sans-serif; color: #fff; }
.ptab.rcp::after { background: linear-gradient(#111, #111) 3px 5px / 17px 9px no-repeat #d5d5d5; }
.pgear { position: absolute; right: 0; top: 3px; }
.ptools { display: flex; justify-content: space-between; height: 23px; padding: 1px 105px 0 4px; border-bottom: 1px solid #bcc6dc; background: #f5f5f9; }
.ptools button { position: relative; width: 19px; height: 19px; }
.ptools button svg { width: 19px; height: 19px; }
.ptools .menu::after { width: 4px; height: 4px; background: #111; }
.layers { flex: 1; min-height: 0; background: #fff; border-left: 1px solid #c8cfdf; overflow: hidden; }
table { width: 100%; table-layout: fixed; border-spacing: 0; }
col.c { width: 33px; }
col.m { width: 23px; }
th { height: 24px; padding: 0 0 1px 6px; border-right: 1px solid #e2e2e2; font-weight: 400; text-align: left; overflow: hidden; white-space: nowrap; }
th:nth-child(n + 2) { padding: 0 0 1px; text-align: center; }
th:nth-child(6) { padding-left: 5px; border: 0; text-align: left; }
td { height: 19px; padding: 0; border-bottom: 1px dotted #ddd; white-space: nowrap; line-height: 15px; }
td:first-child { padding-left: 23px; }
td.child:first-child { padding-left: 39px; }
td.parent { position: relative; }
.chev { position: absolute; left: 7px; top: 4px; }
td:nth-child(n + 2) > * { display: block; margin: 0 auto; }
.current { font-weight: 700; }
.swatch { width: 14px; height: 14px; border: 1px solid #000; }
.black { background: #000; }
.azure { background: #0a72ff; }
.red { background: #f00; }
.blue { background: #00f; }
.gray { background: #808080; }
td:last-child > .mat { width: 15px; height: 15px; margin-left: 2px; border: 1px solid #e2e2e2; border-radius: 50%; background: #f8f8f8; }
.hscroll { display: flex; align-items: center; gap: 6px; height: 15px; padding: 0 8px 0 6px; background: #f0f0f0; fill: none; stroke: #555; stroke-width: 2; }
.track { flex: 1; height: 15px; }
.track .thumb { display: block; width: 58%; height: 15px; background: #cdcdcd; }

.osnap { position: relative; display: grid; grid-template-columns: 43px 48px 51px 44px 44px 37px 47px 42px 52px 48px 57px 68px 1fr; height: 44px; padding: 3px 0 0 9px; white-space: nowrap; }
.osnap::before { left: 3px; top: 0; }
.osnap label { display: flex; align-items: center; gap: 4px; height: 15px; }
.osnap input { appearance: none; flex: none; width: 13px; height: 13px; margin: 0; border: 1px solid #333; background: #fff; display: grid; place-items: center; }
.osnap input:checked::after { content: ""; width: 9px; height: 4px; margin-top: -3px; border: solid #333; border-width: 0 0 1px 1px; transform: rotate(-45deg); }
.osnap input:disabled { width: 11px; height: 11px; border-color: #aaa; background: #e0e0e0; }

.status { display: grid; grid-template-columns: 39px 68px 68px 68px 68px minmax(0, 1fr) 51px 36px 37px 38px 57px 46px 71px 33px 16px; height: 20px; border-top: 1px solid #bcc6dc; }
.status > * { border-right: 1px solid #bcc6dc; overflow: hidden; line-height: 19px; text-align: center; white-space: nowrap; }
.status .layer { display: flex; align-items: center; gap: 2px; padding-left: 3px; }
.status .layer i { width: 14px; height: 14px; background: #000; }
.status .on { background: #e2f2ff; font-weight: 700; }
.status .start { text-align: left; }
.status > :last-child { border-right: 0; }

/* Connector window */
.speckle { position: relative; display: flex; flex-direction: column; min-width: 0; border-left: 1px solid #777; border-top: 2px solid #003a70; background: #fafafa; box-shadow: 0 0 12px rgba(0, 0, 0, .45); font-family: Roboto, sans-serif; }
.titlebar { display: flex; align-items: center; height: 30px; padding: 0 1px 2px 9px; background: #fff; font: 11px/15px "Open Sans", sans-serif; }
.titlebar span { flex: 1; margin-left: 5px; }
.titlebar button { display: grid; place-items: center; width: 45px; height: 28px; }
.titlebar button svg { fill: none; stroke: #000; }
.appbar { display: flex; align-items: center; gap: 24px; height: 64px; padding-left: 24px; border-radius: 0 0 4px 4px; background: #fff; box-shadow: 0 1px 3px rgba(0, 0, 0, .45); }
h1, h2 { font-size: 20px; line-height: 32px; color: #3c3c3c; }
.content { padding: 20px 17px; }
.card { padding: 12px 16px 16px; border-radius: 8px; background: #fff; box-shadow: 0 1px 4px rgba(0, 0, 0, .4); }
.cardtop { display: flex; align-items: center; gap: 12px; padding-right: 6px; }
.cardtop h2 { flex: 1; }
.cardtop a { margin-top: 4px; fill: #047efb; }
.cardrow { display: grid; grid-template-columns: 131px minmax(0, 1fr) 120px; margin-top: 30px; }
.link { display: flex; align-items: center; gap: 8px; padding: 0 0 1px 10px; font-size: 12px; color: #047efb; }
.link svg { stroke: #047efb; stroke-width: 1.5; }
.receive { display: flex; align-items: center; justify-content: center; gap: 7px; height: 32px; border-radius: 4px; background: #047efb; color: #fff; font-size: 14px; font-weight: 700; box-shadow: 0 2px 3px rgba(0, 0, 0, .35); }
.fab { position: absolute; right: 32px; bottom: 32px; display: grid; place-items: center; width: 60px; height: 60px; border-radius: 50%; background: #047efb; box-shadow: 0 4px 8px rgba(0, 0, 0, .4); }
```
